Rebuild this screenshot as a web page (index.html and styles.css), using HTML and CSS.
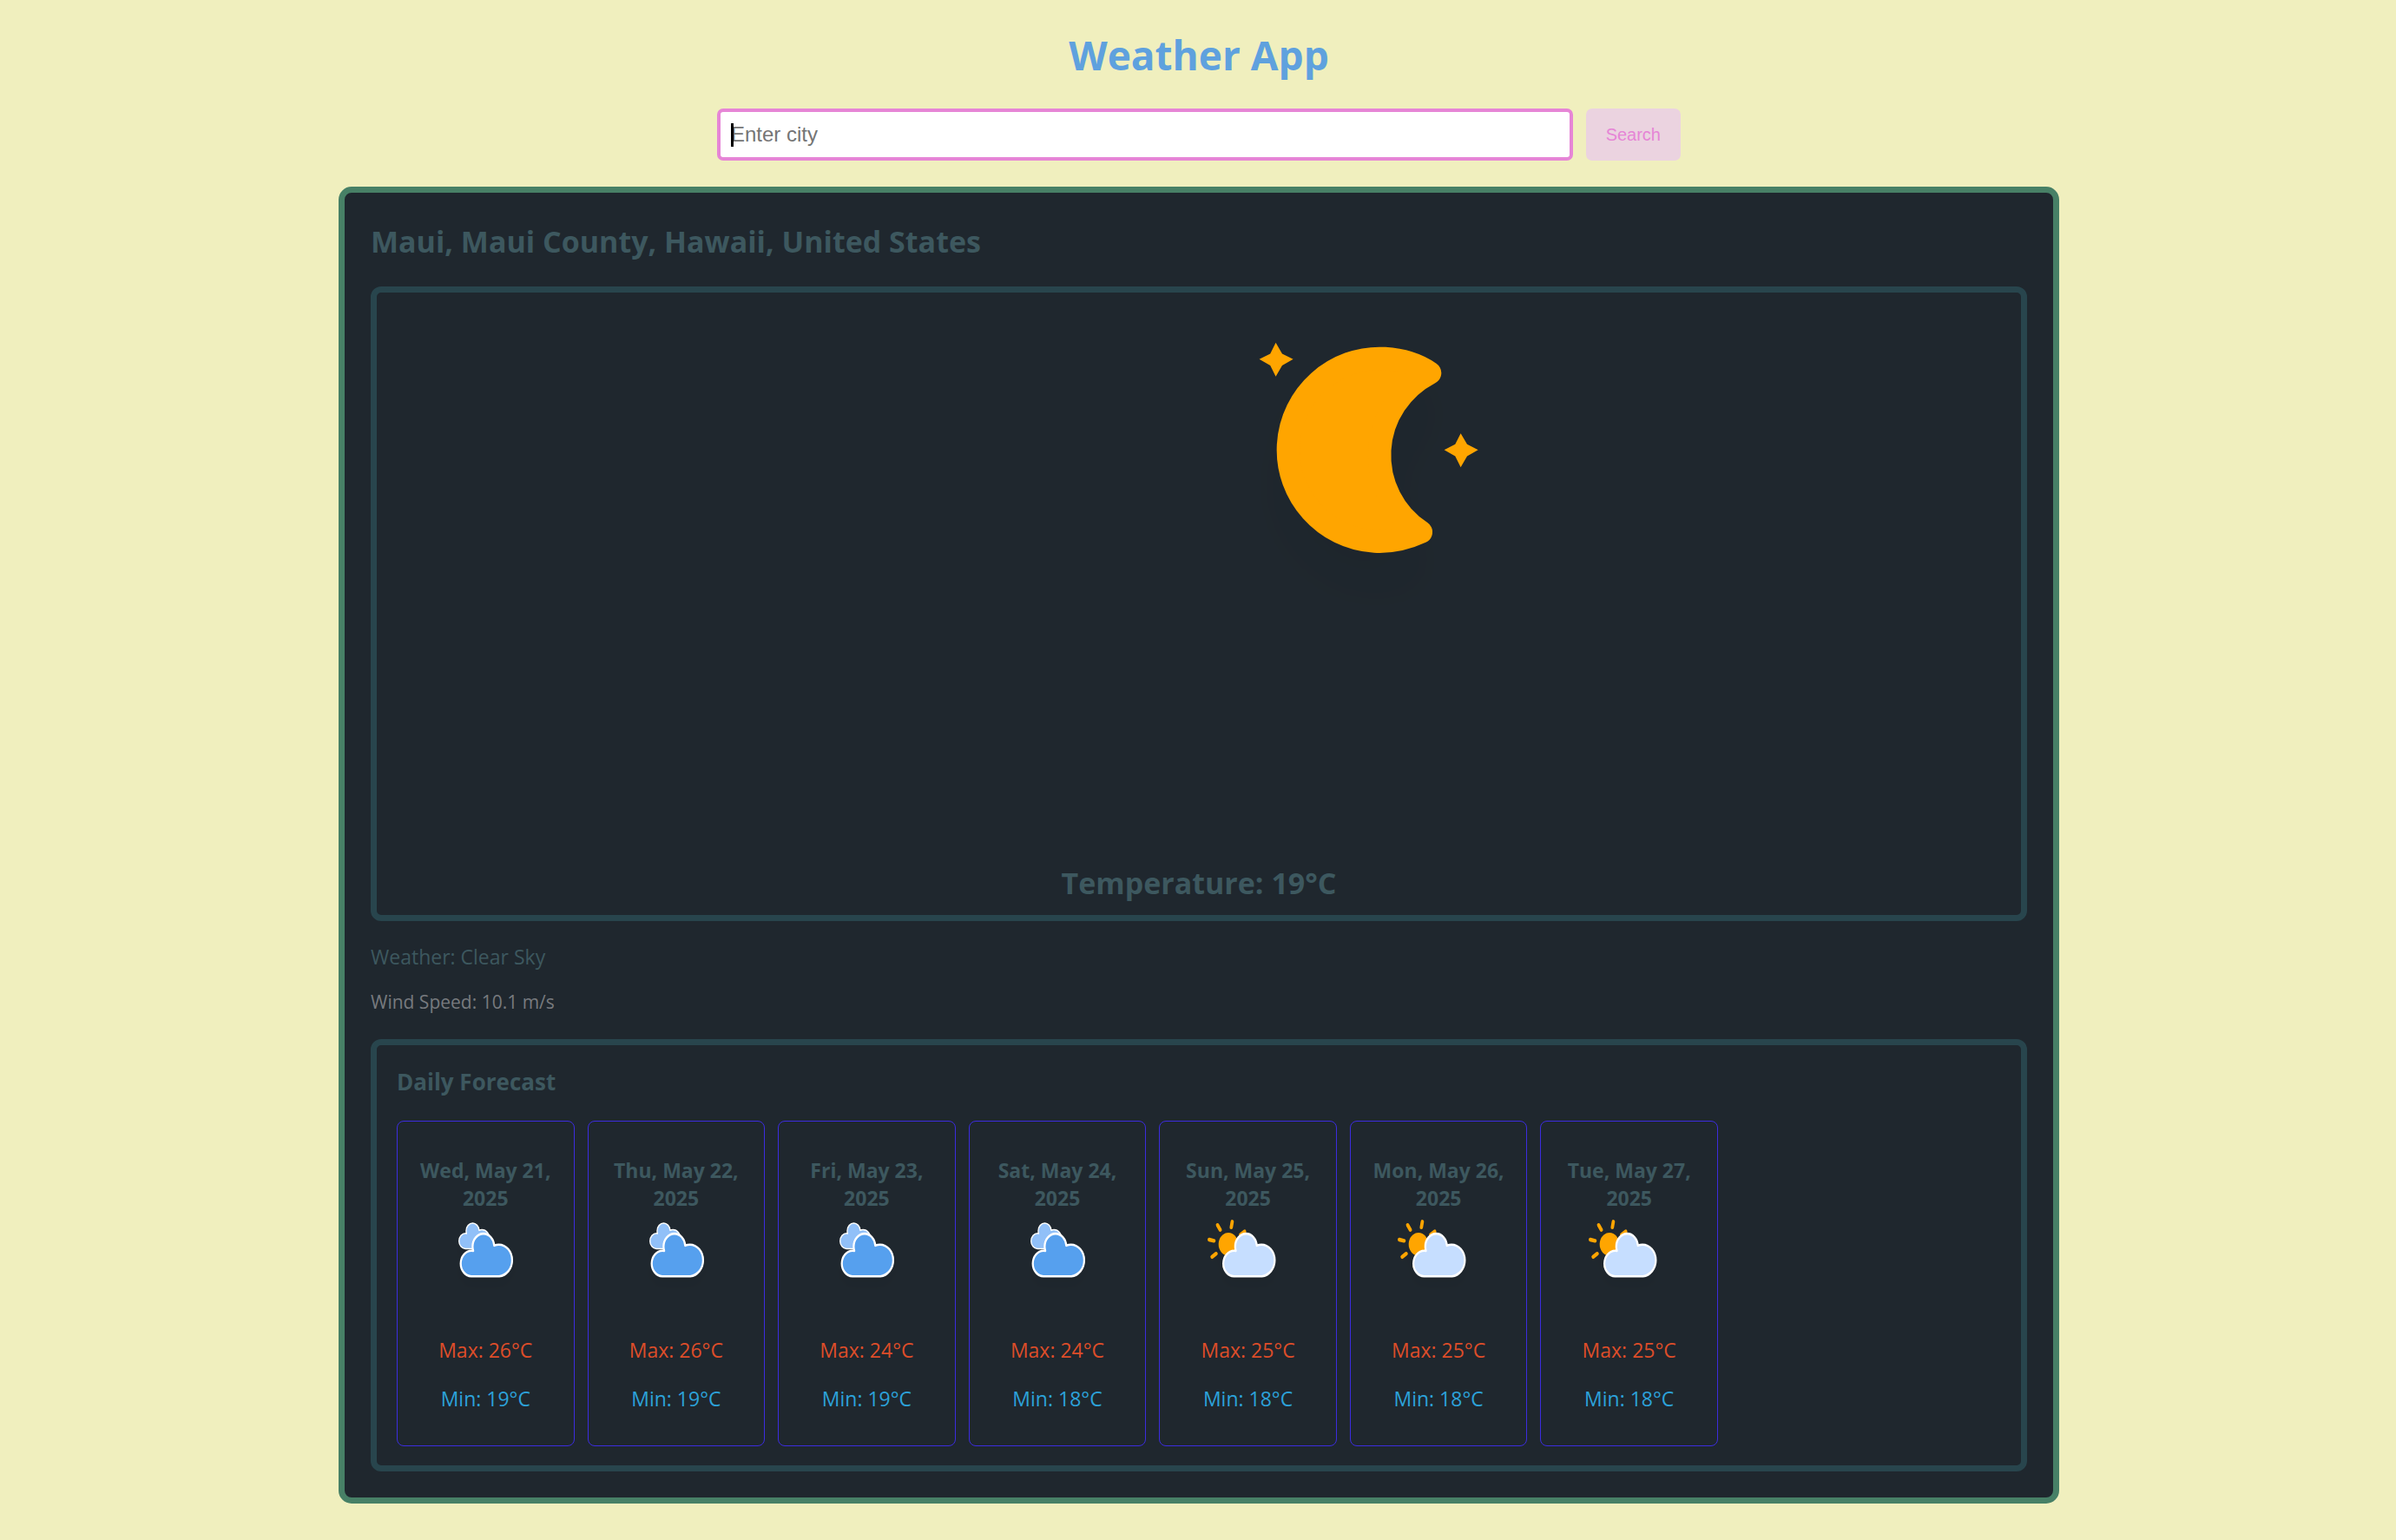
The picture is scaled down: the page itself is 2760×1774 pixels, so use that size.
FILE: index.html
```html
<!DOCTYPE html>
<html lang="en">
<head>
<meta charset="utf-8">
<title>Weather App</title>
<link rel="stylesheet" href="styles.css">
</head>
<body>
<svg class="defs" width="0" height="0" aria-hidden="true">
  <defs>
    <filter id="shadow" x="-30%" y="-30%" width="160%" height="180%">
      <feGaussianBlur in="SourceAlpha" stdDeviation="3"/>
      <feOffset dx="0" dy="4" result="offsetblur"/>
      <feComponentTransfer><feFuncA type="linear" slope="0.05"/></feComponentTransfer>
      <feMerge><feMergeNode/><feMergeNode in="SourceGraphic"/></feMerge>
    </filter>
    <path id="cloud" stroke="#fff" stroke-width="1.2" stroke-linejoin="round" d="M47.7,35.4c0-4.6-3.7-8.2-8.2-8.2c-1,0-1.9,0.2-2.8,0.5c-0.3-3.4-3.1-6.2-6.6-6.2c-3.7,0-6.7,3-6.7,6.7c0,0.8,0.2,1.6,0.4,2.3c-0.3-0.1-0.7-0.1-1-0.1c-3.7,0-6.7,3-6.7,6.7c0,3.6,2.9,6.6,6.5,6.7l17.2,0C44.2,43.3,47.7,39.8,47.7,35.4z"/>
    <path id="ray" d="M0 9v3" fill="none" stroke="orange" stroke-width="2" stroke-linecap="round"/>
    <symbol id="cloudy" viewBox="-0.8 10 64 54" preserveAspectRatio="none">
      <g filter="url(#shadow)">
        <use href="#cloud" fill="#91c0f8" transform="translate(5.4,2.1) scale(0.6)"/>
        <use href="#cloud" fill="#57a0ee" transform="translate(0,-1)"/>
      </g>
    </symbol>
    <symbol id="partly" viewBox="-0.5 10 64 54" preserveAspectRatio="none">
      <g filter="url(#shadow)">
        <g transform="translate(19.2,26) rotate(11.5)">
          <use href="#ray"/>
          <use href="#ray" transform="rotate(45)"/>
          <use href="#ray" transform="rotate(90)"/>
          <use href="#ray" transform="rotate(135)"/>
          <use href="#ray" transform="rotate(180)"/>
          <use href="#ray" transform="rotate(225)"/>
          <use href="#ray" transform="rotate(270)"/>
          <use href="#ray" transform="rotate(315)"/>
          <circle r="6" fill="orange"/>
        </g>
        <use href="#cloud" fill="#c6deff" transform="translate(0,-1)"/>
      </g>
    </symbol>
  </defs>
</svg>
<header class="header">
  <h1 class="title">Weather App</h1>
  <form class="search">
    <div class="field">
      <input class="input" type="text" placeholder="Enter city" aria-label="City">
      <span class="caret"></span>
    </div>
    <button class="button" type="button">Search</button>
  </form>
</header>
<main class="weather">
  <h2 class="place">Maui, Maui County, Hawaii, United States</h2>
  <section class="panel current">
    <svg class="moon" viewBox="0 0 64 60" role="img" aria-label="Clear night">
      <g filter="url(#shadow)" fill="orange">
        <g transform="translate(37.05,2.45)">
          <polygon points="3.3,1.5 4,2.7 5.2,3.3 4,4 3.3,5.2 2.7,4 1.5,3.3 2.7,2.7"/>
          <polygon transform="translate(20.2,9.9)" points="3.3,1.5 4,2.7 5.2,3.3 4,4 3.3,5.2 2.7,4 1.5,3.3 2.7,2.7"/>
          <path transform="translate(0.05,-0.1) rotate(3.2 12.5 15.15)" stroke="orange" stroke-width="2.5" stroke-linejoin="round" d="M14.5,13.2c0-3.7,2-6.9,5-8.7c-1.5-0.9-3.2-1.3-5-1.3c-5.5,0-10,4.5-10,10s4.5,10,10,10c1.8,0,3.5-0.5,5-1.3C16.5,20.2,14.5,16.9,14.5,13.2z"/>
        </g>
      </g>
    </svg>
    <h2 class="temperature">Temperature: 19°C</h2>
  </section>
  <p class="condition">Weather: Clear Sky</p>
  <p class="wind">Wind Speed: 10.1 m/s</p>
  <section class="panel forecast">
    <h3 class="subtitle">Daily Forecast</h3>
    <div class="days">
      <article class="day"><h4 class="date">Wed, May 21, 2025</h4><svg class="icon"><use href="#cloudy"/></svg><p class="max">Max: 26°C</p><p class="min">Min: 19°C</p></article>
      <article class="day"><h4 class="date">Thu, May 22, 2025</h4><svg class="icon"><use href="#cloudy"/></svg><p class="max">Max: 26°C</p><p class="min">Min: 19°C</p></article>
      <article class="day"><h4 class="date">Fri, May 23, 2025</h4><svg class="icon"><use href="#cloudy"/></svg><p class="max">Max: 24°C</p><p class="min">Min: 19°C</p></article>
      <article class="day"><h4 class="date">Sat, May 24, 2025</h4><svg class="icon"><use href="#cloudy"/></svg><p class="max">Max: 24°C</p><p class="min">Min: 18°C</p></article>
      <article class="day"><h4 class="date">Sun, May 25, 2025</h4><svg class="icon"><use href="#partly"/></svg><p class="max">Max: 25°C</p><p class="min">Min: 18°C</p></article>
      <article class="day"><h4 class="date">Mon, May 26, 2025</h4><svg class="icon"><use href="#partly"/></svg><p class="max">Max: 25°C</p><p class="min">Min: 18°C</p></article>
      <article class="day"><h4 class="date">Tue, May 27, 2025</h4><svg class="icon"><use href="#partly"/></svg><p class="max">Max: 25°C</p><p class="min">Min: 18°C</p></article>
    </div>
  </section>
</main>
</body>
</html>
```
FILE: styles.css
```css
* { box-sizing: border-box; }

body {
  margin: 0;
  padding: 31px 30px 42px 32px;
  background: #f0efbe;
  color: #3d585f;
  font-family: "Open Sans", "Noto Sans", sans-serif;
  font-size: 23px;
  line-height: 32px;
}

h1, h2, h3, h4, p { margin: 0; }

.defs { position: absolute; }

.header {
  display: flex;
  flex-direction: column;
  align-items: center;
  gap: 30px;
}

.title {
  color: #5fa1de;
  font-size: 46px;
  line-height: 64px;
}

.search {
  display: flex;
  gap: 15px;
  width: 100%;
  max-width: 1110px;
}

.field {
  position: relative;
  flex: 1;
}

.input {
  display: block;
  width: 100%;
  height: 60px;
  padding: 0 12px;
  border: 4px solid #e685d6;
  border-radius: 7px;
  background: #fff;
  font: 24px/32px "Liberation Sans", Arial, sans-serif;
}

.input::placeholder { color: #757575; }
.input:focus { outline: none; }

.caret {
  position: absolute;
  top: 17px;
  left: 16px;
  width: 3px;
  height: 27px;
  background: #000;
}

.button {
  padding: 0 23px;
  border: 0;
  border-radius: 7px;
  background: #ebd3e0;
  color: #e685d6;
  font: 20px/24px "Liberation Sans", Arial, sans-serif;
}

.weather {
  max-width: 1982px;
  margin: 30px auto 0;
  padding: 30px;
  border: 7px solid #478066;
  border-radius: 15px;
  background: #1f272e;
}

.place, .temperature {
  font-size: 34px;
  line-height: 48px;
}

.place { padding: 2px 0 28px; }

.panel {
  border: 7px solid #28454d;
  border-radius: 12px;
}

.current {
  display: flex;
  flex-direction: column;
  align-items: center;
  gap: 7px;
  padding: 16px 15px 13px;
}

.moon {
  width: 675px;
  height: 633px;
}

.condition { margin-top: 25px; }

.wind {
  margin: 20px 0 27px;
  color: #777a7e;
  font-size: 21px;
}

.forecast { padding: 22px 23px; }

.subtitle {
  margin-bottom: 25px;
  font-size: 26px;
  line-height: 40px;
}

.days {
  display: grid;
  grid-template-columns: repeat(7, 1fr);
  gap: 15px;
  max-width: 1522px;
}

.day {
  display: flex;
  flex-direction: column;
  align-items: center;
  padding: 40px 15px 38px;
  border: 1px solid #3c2cde;
  border-radius: 8px;
  text-align: center;
}

.icon {
  width: 120px;
  height: 119px;
  margin-top: 2px;
}

.max { margin: 22px 0 24px; color: #dd4d29; }
.min { color: #2ca2da; }
```
